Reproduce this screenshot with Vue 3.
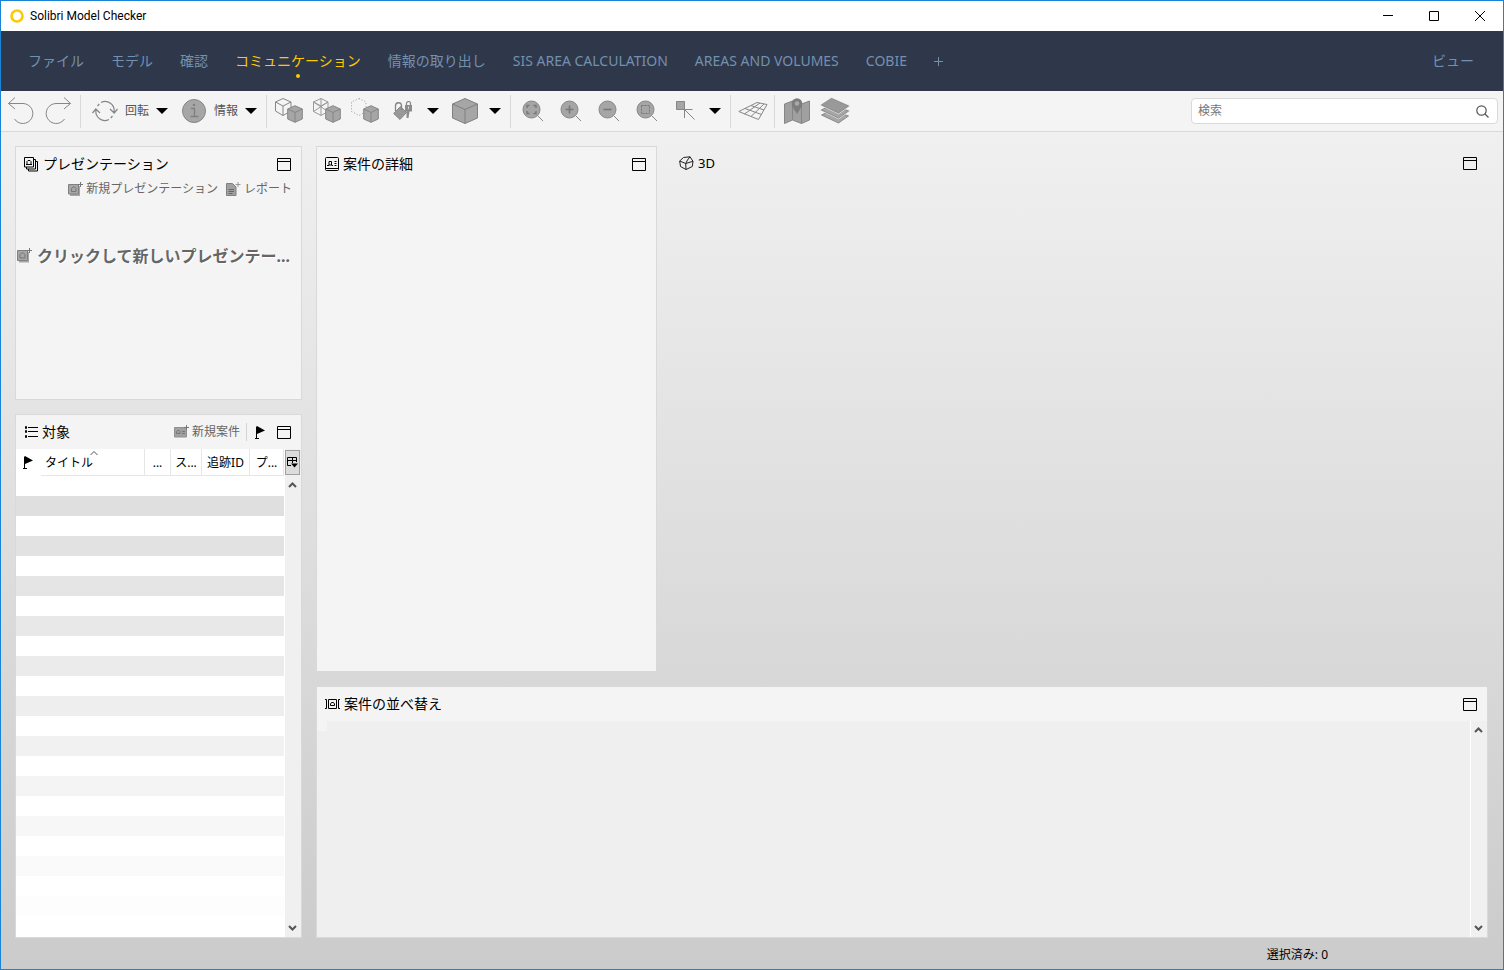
<script setup>
import { ref } from 'vue'

const tabs = [
  'ファイル',
  'モデル',
  '確認',
  'コミュニケーション',
  '情報の取り出し',
  'SIS AREA CALCULATION',
  'AREAS AND VOLUMES',
  'COBIE',
]
const active = ref('コミュニケーション')
const query = ref('')

const rows = Array.from({ length: 22 }, (_, i) => {
  const shade = 223 + Math.floor(i / 2) * 3
  return { id: i, color: i % 2 ? `rgb(${shade}, ${shade}, ${shade})` : '#ffffff' }
})
</script>

<template>
  <div class="window">
    <svg class="defs" width="0" height="0" aria-hidden="true">
      <defs>
        <symbol id="maximize" viewBox="0 0 14 13">
          <path d="M.5 .5h13v12H.5zM0 3.5h14" fill="none" stroke="#000" />
        </symbol>
        <symbol id="solid-cube" viewBox="0 0 16 18">
          <path d="M8 .7 15.3 4v10L8 17.3.7 14V4z" fill="#a6a6a6" stroke="#868686" />
          <path d="M.7 4 8 7.5 15.3 4M8 7.5v9.8" fill="none" stroke="#868686" />
        </symbol>
        <symbol id="lens" viewBox="0 0 22 22">
          <circle cx="9.500" cy="9.500" r="8.500" fill="#a6a6a6" stroke="#868686" />
          <path d="m16 16 5 5" stroke="#868686" />
        </symbol>
        <symbol id="flag" viewBox="0 0 10 13">
          <path d="M1.500 .5v12M0 12.500h4" stroke="#000" fill="none" />
          <path d="M2 0l8 4.500L2 8z" />
        </symbol>
        <symbol id="chevron-up" viewBox="0 0 9 6">
          <path d="m1 5 3.500-3.500L8 5" fill="none" stroke="#555" stroke-width="2" />
        </symbol>
        <symbol id="chevron-down" viewBox="0 0 9 6">
          <path d="m1 1 3.500 3.500L8 1" fill="none" stroke="#555" stroke-width="2" />
        </symbol>
        <symbol id="caret" viewBox="0 0 12 6">
          <path d="M0 0h12L6 6z" />
        </symbol>
      </defs>
    </svg>

    <header class="titlebar">
      <svg width="14" height="14" viewBox="0 0 14 14" aria-hidden="true">
        <circle cx="7" cy="7" r="5.500" fill="none" stroke="#fdc900" stroke-width="2.600" />
      </svg>
      <h1>Solibri Model Checker</h1>
      <div class="window-buttons">
        <button type="button" aria-label="最小化">
          <svg width="10" height="10" viewBox="0 0 10 10"><path d="M0 4.500h10" stroke="#000" /></svg>
        </button>
        <button type="button" aria-label="最大化">
          <svg width="10" height="10" viewBox="0 0 10 10"><path d="M.5 .5h9v9h-9z" fill="none" stroke="#000" /></svg>
        </button>
        <button type="button" aria-label="閉じる">
          <svg width="10" height="10" viewBox="0 0 10 10"><path d="m0 0 10 10m0-10-10 10" stroke="#000" /></svg>
        </button>
      </div>
    </header>

    <nav class="tabs">
      <button
        v-for="tab in tabs"
        :key="tab"
        type="button"
        class="tab"
        :class="{ active: tab === active }"
        @click="active = tab"
      >{{ tab }}</button>
      <button type="button" class="tab" aria-label="追加">
        <svg width="9" height="9" viewBox="0 0 9 9"><path d="M0 4.500h9M4.500 0v9" stroke="#7391ae" /></svg>
      </button>
      <button type="button" class="tab view">ビュー</button>
    </nav>

    <div class="toolbar">
      <div class="group">
        <button type="button" class="tool" aria-label="元に戻す">
          <svg width="28" height="30" viewBox="0 0 28 30" fill="none" stroke="#868686">
            <path d="M8 1.500 1.500 7.500 8 13M1.500 7.500H16a10 10 0 1 1-8.500 15.500" />
          </svg>
        </button>
        <button type="button" class="tool" aria-label="やり直し">
          <svg width="28" height="30" viewBox="0 0 28 30" fill="none" stroke="#868686">
            <path d="m19 1.500 6.500 6L19 13M25.500 7.500H11a10 10 0 1 0 8.500 15.500" />
          </svg>
        </button>
      </div>
      <div class="group labelled">
        <button type="button" class="tool with-label">
          <span class="glyph">
            <svg width="26" height="22" viewBox="0 0 26 22" fill="none" stroke="#868686" stroke-width="1.200">
              <path d="M9 2.500A9 9 0 0 1 22 12M18 9l4.200 4L25.500 9M17 19.500A9 9 0 0 1 4 10M.5 13l3.300-4L8 13M5.500 6l1.800-2M20.500 16l-1.800 2" />
            </svg>
          </span>
          <span class="label">回転</span>
        </button>
        <button type="button" class="drop" aria-label="回転メニュー"><svg width="12" height="6"><use href="#caret" /></svg></button>
        <button type="button" class="tool with-label">
          <span class="glyph">
            <svg width="26" height="26" viewBox="0 0 26 26">
              <circle cx="13" cy="13" r="11.500" fill="#a6a6a6" stroke="#868686" />
              <path d="M10 10.500h3.500v7.500M9.500 18.500h8" fill="none" stroke="#808080" stroke-width="1.400" />
              <circle cx="13" cy="7" r="1.300" fill="#808080" />
            </svg>
          </span>
          <span class="label">情報</span>
        </button>
        <button type="button" class="drop" aria-label="情報メニュー"><svg width="12" height="6"><use href="#caret" /></svg></button>
      </div>
      <div class="group">
        <button type="button" class="tool" aria-label="表示">
          <svg width="30" height="28" viewBox="0 0 30 28">
            <path d="M9 1.500 17 5v9L9 18.500 1.500 14V5zM1.500 5 9 9l8-4M9 9v9.500" fill="none" stroke="#868686" />
            <use href="#solid-cube" x="13" y="8" width="16" height="18" />
          </svg>
        </button>
        <button type="button" class="tool" aria-label="透過表示">
          <svg width="30" height="28" viewBox="0 0 30 28">
            <path d="M9 1.500 16 5v9.500L9 18.500 1.500 14.500V5zM1.500 5 16 14.500M16 5 1.500 14.500M9 1.500v17M1.500 5l7.500 4 7-4" fill="none" stroke="#9a9a9a" />
            <use href="#solid-cube" x="13" y="8" width="16" height="18" />
          </svg>
        </button>
        <button type="button" class="tool" aria-label="非表示">
          <svg width="30" height="28" viewBox="0 0 30 28">
            <path d="M9 1.500 16 5v9.500L9 18.500 1.500 14.500V5z" fill="none" stroke="#9a9a9a" stroke-dasharray="1 2" />
            <use href="#solid-cube" x="13" y="8" width="16" height="18" />
          </svg>
        </button>
        <button type="button" class="tool" aria-label="色設定">
          <svg width="20" height="20" viewBox="0 0 20 20">
            <path d="m7.500 5.500 6 6L7 18.500.7 12.500z" fill="#999" stroke="#868686" />
            <path d="M2.500 10V5A3 3 0 0 1 8.500 4.500V9" fill="none" stroke="#868686" stroke-width="1.300" />
            <path d="M12 4h7v6.500h-2.500L15.500 17H13.500v-6.500H12z" fill="#8c8c8c" />
            <path d="M13.500 4V2.500a2 2 0 0 1 4 0V4" fill="none" stroke="#868686" stroke-width="1.200" />
            <path d="M15.500 5.500v2.500" stroke="#d5d5d5" />
          </svg>
        </button>
        <button type="button" class="drop" aria-label="色メニュー"><svg width="12" height="6"><use href="#caret" /></svg></button>
        <button type="button" class="tool" aria-label="立体表示">
          <svg width="28" height="28" viewBox="0 0 28 28">
            <path d="m14 1.500 12.500 5.500v14L14 26.500 1.500 21V7z" fill="#a6a6a6" stroke="#808080" />
            <path d="M1.500 7 14 12.500 26.500 7M14 12.500v14" fill="none" stroke="#808080" />
          </svg>
        </button>
        <button type="button" class="drop" aria-label="立体メニュー"><svg width="12" height="6"><use href="#caret" /></svg></button>
      </div>
      <div class="group">
        <button type="button" class="tool" aria-label="全体表示">
          <svg width="22" height="22" viewBox="0 0 22 22">
            <use href="#lens" width="22" height="22" />
            <path d="M5 8V5.500h2.500M11.500 5.500H14V8M14 11v2.500h-2.500M7.500 13.500H5V11" fill="none" stroke="#777" stroke-width="1.400" />
          </svg>
        </button>
        <button type="button" class="tool" aria-label="拡大">
          <svg width="22" height="22" viewBox="0 0 22 22">
            <use href="#lens" width="22" height="22" />
            <path d="M5.500 9.500h8M9.500 5.500v8" stroke="#777" stroke-width="1.600" />
          </svg>
        </button>
        <button type="button" class="tool" aria-label="縮小">
          <svg width="22" height="22" viewBox="0 0 22 22">
            <use href="#lens" width="22" height="22" />
            <path d="M5.500 9.500h8" stroke="#777" stroke-width="1.600" />
          </svg>
        </button>
        <button type="button" class="tool" aria-label="範囲拡大">
          <svg width="22" height="22" viewBox="0 0 22 22">
            <use href="#lens" width="22" height="22" />
            <path d="M5.500 5.500h8v8h-8z" fill="none" stroke="#777" stroke-dasharray="2 1" />
          </svg>
        </button>
        <button type="button" class="tool" aria-label="選択">
          <svg width="20" height="20" viewBox="0 0 20 20" stroke="#868686">
            <path d="M1.500 .5h8v8h-8z" fill="#a6a6a6" />
            <path d="M9.500 17V8.500h8M9.500 8.500l10 10" fill="none" />
          </svg>
        </button>
        <button type="button" class="drop" aria-label="選択メニュー"><svg width="12" height="6"><use href="#caret" /></svg></button>
      </div>
      <div class="group">
        <button type="button" class="tool" aria-label="断面">
          <svg width="30" height="20" viewBox="0 0 30 20" fill="none" stroke="#868686">
            <path d="M.8 10.500 19 1.500l10 2-8.500 15zM7 7.500l16.500 6M13 4.500l13 4.500M6.500 13 22 2M13 15.500 26 3" />
          </svg>
        </button>
      </div>
      <div class="group last">
        <button type="button" class="tool" aria-label="地図">
          <svg width="28" height="28" viewBox="0 0 28 28">
            <path d="m1.500 7 8-3 9 3 8-3v19l-8 3.500-9-3.500-8 3.500z" fill="#a0a0a0" stroke="#868686" />
            <path d="M9.500 4v19M18.500 7v19.500" stroke="#868686" />
            <path d="M14 17C10.500 11.500 8.700 9.500 8.700 6.500a5.300 5.300 0 0 1 10.600 0c0 3-1.800 5-5.300 10.500z" fill="#7d7d7d" />
            <circle cx="14" cy="6.500" r="2.300" fill="#a8a8a8" />
          </svg>
        </button>
        <button type="button" class="tool" aria-label="レイヤー">
          <svg width="30" height="28" viewBox="0 0 30 28" stroke="#8c8c8c">
            <path d="m1.500 18 10-5 17 6-10 7z" fill="#a6a6a6" />
            <path d="m1.500 13 10-5 17 6-10 7z" fill="#a6a6a6" stroke="#e0e0e0" stroke-width="2" />
            <path d="m1.500 13 10-5 17 6-10 7z" fill="#a6a6a6" />
            <path d="m1.500 8 10-6.500 17 7.500-10 7z" fill="#999" stroke="#e0e0e0" stroke-width="2" />
            <path d="m1.500 8 10-6.500 17 7.500-10 7z" fill="#999" />
          </svg>
        </button>
      </div>
      <label class="search">
        <input v-model="query" type="text" placeholder="検索" aria-label="検索" />
        <svg width="13" height="13" viewBox="0 0 13 13" fill="none" stroke="#555" stroke-width="1.200">
          <circle cx="5.500" cy="5.500" r="4.700" />
          <path d="m9 9 3.500 3.500" />
        </svg>
      </label>
    </div>

    <main class="workspace">
      <div class="column">
        <section class="panel presentation">
          <div class="panel-head">
            <svg width="15" height="15" viewBox="0 0 15 15" fill="none" stroke="#000">
              <path d="M.5 .5h9v9.500h-9zM9.500 2.500h2v9.500h-9V10M11.500 4.500h2v9.500h-9v-2" />
              <path d="M2 7.500h6M3 7V4.500L4 3.500h2l1 1V7" />
            </svg>
            <h2>プレゼンテーション</h2>
            <button type="button" class="max" aria-label="最大化"><svg width="14" height="13"><use href="#maximize" /></svg></button>
          </div>
          <div class="actions">
            <button type="button" class="action">
              <svg width="15" height="15" viewBox="0 0 15 15">
                <path d="M2 4h10v10H2z" fill="#a6a6a6" />
                <path d="M.5 2.500h10v9.500H.5z" fill="#a6a6a6" stroke="#808080" />
                <path d="M3.500 9.500v-3L5 5h1.500L8 6.500v3zM12.500 0v5M10 2.500h5" fill="none" stroke="#777" />
              </svg>
              新規プレゼンテーション
            </button>
            <button type="button" class="action">
              <svg width="15" height="15" viewBox="0 0 15 15">
                <path d="M.5 1.500h6l3.500 3.500v8.500H.5z" fill="#a0a0a0" stroke="#808080" />
                <path d="M2.500 7.500h5.500M2.500 9.500h5.500M2.500 11.500h4" stroke="#666" />
                <path d="M12 0v5M9.500 2.500h5" stroke="#999" />
              </svg>
              レポート
            </button>
          </div>
          <button type="button" class="prompt">
            <svg width="16" height="16" viewBox="0 0 16 16">
              <path d="M2 4h10v10.500H2z" fill="#a6a6a6" />
              <path d="M.5 2.500h10V12.500H.5z" fill="#a6a6a6" stroke="#808080" />
              <path d="M3 10V6.500L4.500 5h2L8 6.500V10zM12.500 0v5M10 2.500h5" fill="none" stroke="#777" />
            </svg>
            クリックして新しいプレゼンテー...
          </button>
        </section>

        <section class="panel targets">
          <div class="panel-head">
            <svg width="14" height="12" viewBox="0 0 14 12" fill="none" stroke="#000">
              <path d="M4 1.500h10M4 5.500h10M4 10.500h10M1.500 .5h1v2h-1zM1.500 4.500h1v2h-1zM1.500 9.500h1v2h-1z" />
            </svg>
            <h2>対象</h2>
            <button type="button" class="action push">
              <svg width="15" height="15" viewBox="0 0 15 15">
                <path d="M.5 2.500h12v9.500H.5z" fill="#a0a0a0" stroke="#909090" />
                <path d="M2.500 8.500V6.500l1-1h1.500l1 1v2zM8 6.500h3M8 8.500h3M12.500 0v5M10 2.500h5" fill="none" stroke="#777" />
              </svg>
              新規案件
            </button>
            <span class="rule"></span>
            <button type="button" class="flag" aria-label="フラグ"><svg width="10" height="13"><use href="#flag" /></svg></button>
            <button type="button" class="max beside" aria-label="最大化"><svg width="14" height="13"><use href="#maximize" /></svg></button>
          </div>
          <div class="grid-area">
            <div class="sheet">
              <table>
                <thead>
                  <tr>
                    <th class="c-flag"><svg width="10" height="13" role="img" aria-label="フラグ"><use href="#flag" /></svg></th>
                    <th class="c-title">
                      <span>タイトル</span>
                      <svg class="sort" width="8" height="4" viewBox="0 0 8 4"><path d="M.5 4 4 .5 7.500 4" fill="none" stroke="#555" /></svg>
                    </th>
                    <th class="c-a">...</th>
                    <th class="c-b">ス...</th>
                    <th class="c-c">追跡ID</th>
                    <th class="c-d">プ...</th>
                  </tr>
                </thead>
                <tbody>
                  <tr v-for="row in rows" :key="row.id">
                    <td colspan="6" :style="{ background: row.color }"></td>
                  </tr>
                </tbody>
              </table>
            </div>
            <div class="rail">
              <button type="button" class="columns" aria-label="列の設定">
                <svg width="11" height="11" viewBox="0 0 11 11">
                  <path d="M4 8.500H.5V.5h9V5M.5 3.500h9M5.500 .5V6" fill="none" stroke="#000" />
                  <path d="M4 6.500h7L7.500 10.500z" />
                </svg>
              </button>
              <button type="button" class="scroll" aria-label="上へ"><svg width="9" height="6"><use href="#chevron-up" /></svg></button>
              <button type="button" class="scroll bottom" aria-label="下へ"><svg width="9" height="6"><use href="#chevron-down" /></svg></button>
            </div>
          </div>
        </section>
      </div>

      <div class="column wide">
        <div class="upper">
          <section class="panel detail">
            <div class="panel-head">
              <svg width="14" height="14" viewBox="0 0 14 14" fill="none" stroke="#000">
                <rect x=".5" y=".5" width="13" height="13" rx="1" />
                <path d="M1 11.500h12M9.500 4.500h2M9.500 6.500h2M9.500 8.500h2M2 8.500h2M6.500 8.500h1.500" />
                <path d="M4 4.500h2.500v3.500H4z" />
              </svg>
              <h2>案件の詳細</h2>
              <button type="button" class="max" aria-label="最大化"><svg width="14" height="13"><use href="#maximize" /></svg></button>
            </div>
          </section>
          <section class="viewer">
            <div class="panel-head">
              <svg width="15" height="15" viewBox="0 0 15 15" fill="none" stroke="#222">
                <path d="M.7 5 4.500 1.500 11 .8l3 4.500-.7 5.200L7 13.500 1.500 10.500zM.7 5l6 2.500L14 5.300M6.700 7.500 7 13.500M6.700 7.500 8.500 4 11 .8" />
              </svg>
              <h2 class="latin">3D</h2>
              <button type="button" class="max" aria-label="最大化"><svg width="14" height="13"><use href="#maximize" /></svg></button>
            </div>
          </section>
        </div>

        <section class="panel arrange">
          <div class="panel-head">
            <svg width="15" height="10" viewBox="0 0 15 10" fill="none" stroke="#000">
              <path d="M3.500 .5h8v9h-8zM0 .5h1.500v9H0M15 .5h-1.500v9H15" />
              <path d="M5.500 6.500v-1.500L6.500 3.500h2l1 1.500v1.500z" />
            </svg>
            <h2>案件の並べ替え</h2>
            <button type="button" class="max" aria-label="最大化"><svg width="14" height="13"><use href="#maximize" /></svg></button>
          </div>
          <div class="arrange-body">
            <div class="canvas"></div>
            <div class="rail">
              <button type="button" class="scroll" aria-label="上へ"><svg width="9" height="6"><use href="#chevron-up" /></svg></button>
              <button type="button" class="scroll bottom" aria-label="下へ"><svg width="9" height="6"><use href="#chevron-down" /></svg></button>
            </div>
          </div>
        </section>
      </div>
    </main>

    <footer class="status">選択済み: 0</footer>
  </div>
</template>

<style>
body {
  margin: 0;
}
</style>

<style scoped>
.window {
  display: flex;
  flex-direction: column;
  box-sizing: border-box;
  min-height: 100vh;
  border: 1px solid #1883d7;
  background: linear-gradient(#f0f0f0 131px, #cbcbcb);
  color: #000;
  font: 12px/16px "Noto Sans", "Noto Sans CJK JP", sans-serif;
}

.defs {
  position: absolute;
}

svg {
  display: block;
  flex: none;
}

button {
  margin: 0;
  padding: 0;
  border: 0;
  background: none;
  color: inherit;
  font: inherit;
  white-space: nowrap;
}

h1,
h2 {
  margin: 0;
  font-weight: 400;
}

.titlebar {
  display: flex;
  align-items: center;
  gap: 6px;
  height: 30px;
  padding-left: 9px;
  background: #fff;
}

h1 {
  font: 12px/16px Roboto, sans-serif;
}

.window-buttons {
  display: flex;
  margin-left: auto;
}

.window-buttons button {
  display: flex;
  justify-content: center;
  width: 46px;
}

.tabs {
  display: flex;
  align-items: stretch;
  gap: 27px;
  height: 60px;
  padding: 0 29px 0 27px;
  background: #2f374b;
}

.tab {
  position: relative;
  color: #7391ae;
  font-size: 14px;
  line-height: 20px;
}

.tab.active {
  color: #fdc900;
}

.tab.active::after {
  content: "";
  position: absolute;
  bottom: 13px;
  left: calc(50% - 2px);
  width: 4px;
  height: 4px;
  border-radius: 2px;
  background: #fdc900;
}

.view {
  margin-left: auto;
}

.toolbar {
  display: flex;
  align-items: center;
  height: 40px;
  padding: 0 5px 0 1px;
  border-bottom: 1px solid #d9d9d9;
  background: #f4f4f4;
}

.group {
  display: flex;
  align-items: center;
  height: 33px;
  margin-right: 3px;
  padding-right: 2px;
  border-right: 1px solid #d9d9d9;
}

.group.labelled {
  padding-left: 2px;
}

.group.last {
  border-right: 0;
}

.tool,
.glyph {
  display: flex;
  align-items: center;
  justify-content: center;
  width: 38px;
}

.tool.with-label {
  width: auto;
}

.label {
  margin: 0 2px 0 1px;
  color: #555;
}

.drop {
  display: flex;
  justify-content: center;
  width: 22px;
  margin-right: 2px;
}

.search {
  display: flex;
  align-items: center;
  box-sizing: border-box;
  width: 307px;
  height: 26px;
  margin-left: auto;
  padding: 0 8px 0 6px;
  border: 1px solid #d9d9d9;
  border-radius: 4px;
  background: #fff;
}

.search input {
  flex: 1;
  min-width: 0;
  padding: 0;
  border: 0;
  outline: 0;
  background: none;
  font: inherit;
}

.search input::placeholder {
  color: #777;
}

.workspace {
  display: flex;
  flex: 1;
  gap: 14px;
  padding: 14px 15px 0 14px;
}

.column {
  display: flex;
  flex: 0 0 287px;
  flex-direction: column;
  gap: 14px;
  min-width: 0;
}

.column.wide {
  flex: 1;
}

.upper {
  display: flex;
  flex: 1;
  gap: 14px;
}

.panel {
  display: flex;
  flex-direction: column;
  box-sizing: border-box;
  border: 1px solid #d9d9d9;
  background: #f4f4f4;
}

.presentation {
  flex: 0 0 254px;
}

.targets {
  flex: 1;
}

.detail {
  flex: 0 0 341px;
}

.viewer {
  flex: 1;
}

.arrange {
  flex: 0 0 252px;
}

.panel-head {
  display: flex;
  align-items: center;
  gap: 4px;
  box-sizing: border-box;
  height: 34px;
  padding: 0 10px 0 8px;
}

.viewer .panel-head {
  padding-right: 11px;
}

h2 {
  font-size: 14px;
  line-height: 20px;
}

h2.latin {
  font-size: 13px;
}

.max {
  margin-left: auto;
}

.max.beside {
  margin-left: 8px;
}

.action {
  display: flex;
  align-items: center;
  gap: 3px;
  color: #666;
}

.action.push {
  margin-left: auto;
}

.actions {
  display: flex;
  justify-content: flex-end;
  gap: 8px;
  padding-right: 9px;
}

.prompt {
  display: flex;
  align-items: center;
  gap: 4px;
  margin-top: 47px;
  padding-left: 1px;
  color: #666;
  font-size: 16px;
  font-weight: 700;
  line-height: 24px;
  text-shadow: 1px 1px #fff;
}

.rule {
  width: 1px;
  height: 18px;
  margin: 0 4px 0 2px;
  background: #d4d4d4;
}

.grid-area {
  display: flex;
  flex: 1;
}

.sheet {
  flex: 1;
  background: #fff;
}

table {
  width: 100%;
  border-spacing: 0;
  table-layout: fixed;
}

th {
  box-sizing: border-box;
  height: 27px;
  padding: 2px 0 0;
  border-right: 1px solid #e6e6e6;
  border-bottom: 1px solid #e6e6e6;
  font-weight: 400;
  text-align: center;
  white-space: nowrap;
}

.c-flag {
  width: 25px;
  padding: 0 0 0 7px;
  border-color: transparent;
}

.c-title {
  position: relative;
  width: 104px;
  padding-left: 4px;
  text-align: left;
}

.sort {
  position: absolute;
  top: 2px;
  left: 49px;
}

.c-a {
  width: 26px;
}

.c-b {
  width: 31px;
}

.c-c {
  width: 48px;
}

td {
  height: 20px;
  padding: 0;
}

.rail {
  display: flex;
  flex-direction: column;
  align-items: flex-start;
  width: 16px;
  border-left: 1px solid #fff;
  background: #f0f0f0;
}

.columns {
  display: flex;
  align-items: center;
  justify-content: center;
  box-sizing: border-box;
  width: 15px;
  height: 25px;
  margin: 1px 0;
  border: 1px solid #a0a0a0;
  background: #dcdcdc;
}

.scroll {
  display: flex;
  align-items: center;
  justify-content: center;
  width: 15px;
  height: 18px;
}

.scroll.bottom {
  margin-top: auto;
}

.arrange-body {
  display: flex;
  flex: 1;
  background: #efefef;
}

.canvas {
  flex: 1;
}

.canvas::before {
  content: "";
  display: block;
  width: 10px;
  height: 10px;
  background: #f4f4f4;
}

.status {
  height: 31px;
  padding-right: 175px;
  line-height: 34px;
  text-align: right;
}
</style>
